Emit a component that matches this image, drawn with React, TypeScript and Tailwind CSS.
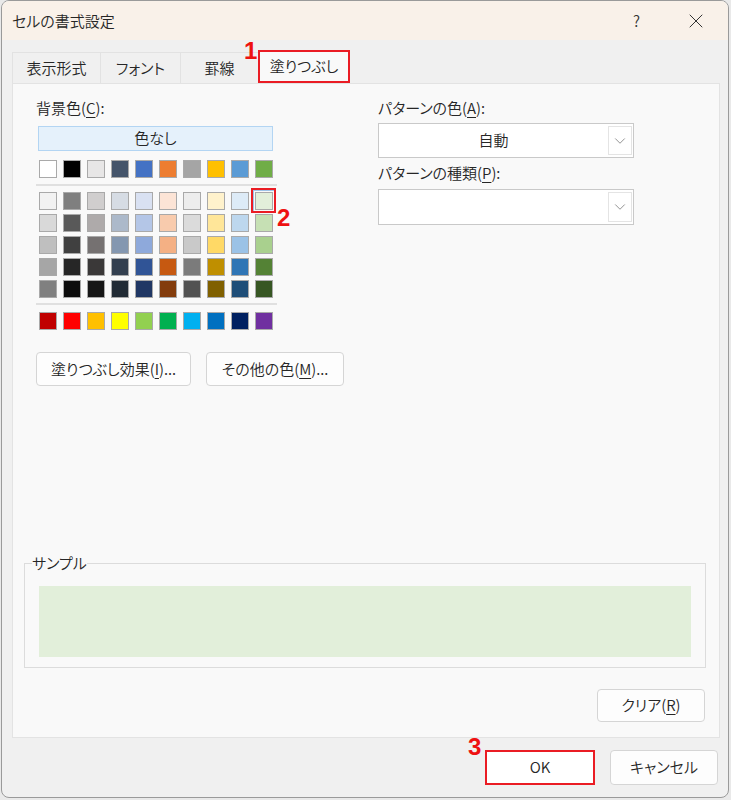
import { ChevronDown, X } from "lucide-react";

// テーマの色（上段）
const themeRow = ["#ffffff", "#000000", "#e7e6e6", "#44546a", "#4472c4", "#ed7d31", "#a5a5a5", "#ffc000", "#5b9bd5", "#70ad47"];

// 明るさ違いの5段
const tintRows = [
  ["#f2f2f2", "#7f7f7f", "#d0cece", "#d6dce4", "#d9e1f2", "#fce4d6", "#ededed", "#fff2cc", "#ddebf7", "#e2efda"],
  ["#d9d9d9", "#595959", "#aeaaaa", "#acb9ca", "#b4c6e7", "#f8cbad", "#dbdbdb", "#ffe699", "#bdd7ee", "#c6e0b4"],
  ["#bfbfbf", "#404040", "#757171", "#8497b0", "#8ea9db", "#f4b084", "#c9c9c9", "#ffd966", "#9bc2e6", "#a9d08e"],
  ["#a6a6a6", "#262626", "#3a3838", "#333f4f", "#305496", "#c65911", "#7b7b7b", "#bf8f00", "#2f75b5", "#548235"],
  ["#808080", "#0d0d0d", "#161616", "#222b35", "#203764", "#833c0c", "#525252", "#806000", "#1f4e78", "#375623"],
];

// 標準の色
const standardRow = ["#c00000", "#ff0000", "#ffc000", "#ffff00", "#92d050", "#00b050", "#00b0f0", "#0070c0", "#002060", "#7030a0"];

const tabs = ["表示形式", "フォント", "罫線", "塗りつぶし"];

function Mnemonic({ children }: { children: string }) {
  return <span className="underline underline-offset-[3px] decoration-1">{children}</span>;
}

function Swatch({ color, selected = false }: { color: string; selected?: boolean }) {
  return (
    <div className="relative w-[18px] h-[18px] border border-[#a9a9a9]" style={{ backgroundColor: color }}>
      {selected && (
        <>
          <div className="absolute -left-[3px] -top-[3px] w-[22px] h-[22px] border border-[#9ec4e8]" />
          <div className="absolute -left-[5px] -top-[5px] w-[25px] h-[25px] border-2 border-[#ea1c24]" />
          <span className="absolute left-[21px] top-[13px] font-['Liberation_Sans',sans-serif] font-bold text-[24px] leading-none text-[#ee1111]">
            2
          </span>
        </>
      )}
    </div>
  );
}

function SwatchRow({ colors, selectedIndex = -1 }: { colors: string[]; selectedIndex?: number }) {
  return (
    <div className="flex gap-[6px]">
      {colors.map((c, i) => (
        <Swatch key={i} color={c} selected={i === selectedIndex} />
      ))}
    </div>
  );
}

function Select({ value, className = "" }: { value?: string; className?: string }) {
  return (
    <div className={`flex w-[256px] border border-[#c9c9c9] bg-white ${className}`}>
      <div className="flex-1 flex items-center justify-center">{value}</div>
      <div className="w-[24px] my-[2px] mr-[1px] border border-[#e4e4e4] flex items-center justify-center">
        <ChevronDown size={18} strokeWidth={1} className="text-[#6f6f6f]" />
      </div>
    </div>
  );
}

function Button({ children, className = "" }: { children: React.ReactNode; className?: string }) {
  return (
    <div
      className={`flex items-center justify-center rounded-[4px] border border-[#d5d5d5] bg-[#fdfdfd] ${className}`}
    >
      {children}
    </div>
  );
}

export default function App() {
  return (
    <div className="w-[731px] h-[800px] bg-[#e9e9e9] font-['Noto_Sans_CJK_JP','Liberation_Sans',sans-serif] font-[350] [font-feature-settings:'palt'] text-[15px] text-[#262626]">
      <div className="ml-[1px] w-[728px] h-[798px] rounded-[8px] border border-[#9a9a9a] bg-[#f0f0f0] overflow-hidden flex flex-col">
        {/* タイトルバー */}
        <div className="h-[39px] shrink-0 bg-[#f9f1e9] flex items-center pl-[10px]">
          <span className="leading-none">セルの書式設定</span>
          <div className="ml-auto flex items-center gap-[44px] pr-[20px] text-[#333]">
            <span className="leading-none">?</span>
            <X size={24} strokeWidth={1} />
          </div>
        </div>

        {/* タブ */}
        <div className="mt-[12px] pl-[10px] flex items-end h-[31px]">
          {tabs.map((t, i) =>
            i === 3 ? (
              <div
                key={t}
                className="relative h-[33px] w-[92px] border-2 border-[#ea1c24] bg-[#f9f9f9] flex items-center justify-center"
              >
                {t}
                <span className="absolute -left-[16px] -top-[13px] font-['Liberation_Sans',sans-serif] font-bold text-[24px] leading-none text-[#ee1111]">
                  1
                </span>
              </div>
            ) : (
              <div
                key={t}
                className={`h-[31px] border border-b-0 border-[#e2e2e2] -mr-px flex items-center justify-center ${
                  i === 0 ? "w-[89px]" : i === 1 ? "w-[81px]" : "w-[79px]"
                }`}
              >
                {t}
              </div>
            )
          )}
        </div>

        {/* タブパネル */}
        <div className="ml-[10px] w-[708px] h-[655px] shrink-0 border border-[#e3e3e3] bg-[#f9f9f9] flex flex-col">
          <div className="flex pt-[15px] pl-[23px]">
            {/* 左: 背景色 */}
            <div className="w-[342px] flex flex-col">
              <div className="leading-[18px]">
                背景色(<Mnemonic>C</Mnemonic>):
              </div>
              <div className="mt-[9px] ml-[2px] w-[235px] h-[25px] border border-[#b3d5f3] bg-[#e5f1fb] flex items-center justify-center">
                色なし
              </div>
              <div className="mt-[9px] ml-[3px]">
                <SwatchRow colors={themeRow} />
              </div>
              <div className="mt-[6px] w-[241px] h-[2px] bg-[#e0e0e0]" />
              <div className="mt-[6px] ml-[3px] flex flex-col gap-[4px]">
                {tintRows.map((row, r) => (
                  <SwatchRow key={r} colors={row} selectedIndex={r === 0 ? 9 : -1} />
                ))}
              </div>
              <div className="mt-[5px] w-[241px] h-[2px] bg-[#e0e0e0]" />
              <div className="mt-[7px] ml-[3px]">
                <SwatchRow colors={standardRow} />
              </div>
              <div className="mt-[22px] flex gap-[15px]">
                <Button className="w-[155px] h-[34px]">
                  塗りつぶし効果(<Mnemonic>I</Mnemonic>)...
                </Button>
                <Button className="w-[138px] h-[34px]">
                  その他の色(<Mnemonic>M</Mnemonic>)...
                </Button>
              </div>
            </div>

            {/* 右: パターン */}
            <div className="w-[256px] flex flex-col">
              <div className="leading-[18px]">
                パターンの色(<Mnemonic>A</Mnemonic>):
              </div>
              <Select value="自動" className="mt-[6px] h-[35px]" />
              <div className="mt-[6px] leading-[18px]">
                パターンの種類(<Mnemonic>P</Mnemonic>):
              </div>
              <Select className="mt-[7px] h-[36px]" />
            </div>
          </div>

          {/* サンプル */}
          <div className="relative mt-[177px] ml-[11px] w-[682px] h-[105px] border border-[#dcdcdc]">
            <span className="absolute left-[7px] -top-[11px] leading-[20px] bg-[#f9f9f9]">サンプル</span>
            <div className="mt-[22px] ml-[14px] w-[652px] h-[71px] bg-[#e2efda]" />
          </div>

          <div className="mt-[21px] mr-[14px] self-end">
            <Button className="w-[108px] h-[33px]">
              クリア(<Mnemonic>R</Mnemonic>)
            </Button>
          </div>
        </div>

        {/* OK / キャンセル */}
        <div className="mt-[12px] pr-[10px] flex justify-end gap-[15px]">
          <div className="relative w-[110px] h-[35px] border-2 border-[#ea1c24] bg-white flex items-center justify-center">
            OK
            <span className="absolute -left-[19px] -top-[17px] font-['Liberation_Sans',sans-serif] font-bold text-[24px] leading-none text-[#ee1111]">
              3
            </span>
          </div>
          <Button className="w-[108px] h-[35px]">キャンセル</Button>
        </div>
      </div>
    </div>
  );
}
